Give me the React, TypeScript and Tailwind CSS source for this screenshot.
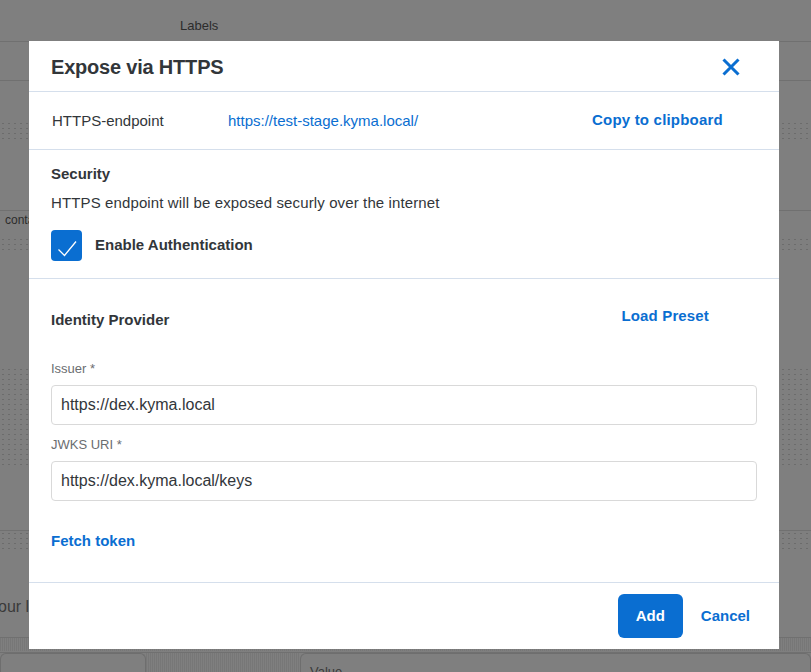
import React from "react";

const font = { fontFamily: '"Liberation Sans", Arial, sans-serif' };

function Dots({ h }: { h: string }) {
  return (
    <div
      className={`${h} w-full bg-[radial-gradient(circle,#6c6c6c_0.8px,transparent_1px)] bg-[length:6px_5px]`}
    />
  );
}

function Background() {
  return (
    <div className="w-full h-full text-[#2c2c2c]">
      <div className="h-[42px] border-b border-[#707070]">
        <div className="pl-[180px] pt-[17px] text-[13px] leading-[18px]">Labels</div>
      </div>
      <div className="h-[39px] border-b border-[#707070]" />
      <div className="h-[40px]" />
      <Dots h="h-[22px]" />
      <div className="h-[68px] border-b border-[#707070]" />
      <div className="h-[26px] pl-[5px] pt-[1px] text-[12px] leading-[16px]">contact</div>
      <Dots h="h-[13px]" />
      <div className="h-[117px]" />
      <Dots h="h-[101px]" />
      <div className="h-[63px] border-b border-[#707070]" />
      <Dots h="h-[22px]" />
      <div className="h-[84px] pt-[44px] -ml-[2px] text-[16px] leading-[20px] text-[#3a3a3a]">
        our labels
      </div>
      <div className="h-[14px] border-t border-[#707070] bg-[repeating-linear-gradient(90deg,#777_0px,#777_1px,#7f7f7f_1px,#7f7f7f_2px)]" />
      <div className="flex h-[30px] border-t border-[#707070] mt-[1px]">
        <div className="w-[146px] border border-[#6e6e6e] rounded-t-[6px] border-b-0" />
        <div className="w-[154px] bg-[repeating-linear-gradient(90deg,#777_0px,#777_1px,#7f7f7f_1px,#7f7f7f_2px)]" />
        <div className="flex-1 border border-[#6e6e6e] rounded-t-[6px] border-b-0 pl-[9px] pt-[10px] text-[13px] leading-[16px] text-[#3a3a3a]">
          Value
        </div>
      </div>
    </div>
  );
}

function Input({ value }: { value: string }) {
  return (
    <div className="h-[40px] w-full border border-[#d9d9d9] rounded-[4px] flex items-center pl-[9px] text-[16px] text-[#32363a]">
      {value}
    </div>
  );
}

export default function App() {
  return (
    <div className="relative w-[811px] h-[672px] overflow-hidden bg-[#7f7f7f]" style={font}>
      <Background />
      <div className="absolute left-[29px] top-[41px] w-[750px] h-[608px] bg-white flex flex-col text-[#32363a]">
        {/* Header */}
        <div className="h-[51px] flex items-center justify-between pl-[22px] pr-[39px] border-b border-[#d5dfec]">
          <div className="text-[20px] font-bold leading-[24px] tracking-[-0.2px] pt-[1px]">Expose via HTTPS</div>
          <svg width="18" height="18" viewBox="0 0 18 18" className="mt-[1px]">
            <path d="M1.5 1.5 L16.5 16.5 M16.5 1.5 L1.5 16.5" stroke="#0a6ed1" strokeWidth="3" strokeLinecap="butt" />
          </svg>
        </div>
        {/* Endpoint row */}
        <div className="h-[58px] flex items-center pl-[23px] border-b border-[#d5dfec] text-[15px] leading-[20px]">
          <div className="w-[176px]">HTTPS-endpoint</div>
          <div className="w-[364px] text-[#0a6ed1]">https://test-stage.kyma.local/</div>
          <div className="text-[#0a6ed1] font-bold -mt-[2px] tracking-[0.2px]">Copy to clipboard</div>
        </div>
        {/* Security */}
        <div className="px-[22px] pt-[14px] pb-[17px] border-b border-[#d5dfec] flex flex-col">
          <div className="text-[15px] leading-[20px] font-bold">Security</div>
          <div className="mt-[9px] text-[15px] leading-[20px] tracking-[0.12px]">
            HTTPS endpoint will be exposed securly over the internet
          </div>
          <div className="mt-[17px] flex items-center">
            <div className="w-[31px] h-[31px] rounded-[4px] bg-[#0a6ed1] flex items-center justify-center">
              <svg width="31" height="31" viewBox="0 0 31 31">
                <path d="M7.5 19.5 L13.5 25.5 L25 11.5" fill="none" stroke="white" strokeWidth="1.3" />
              </svg>
            </div>
            <div className="ml-[13px] text-[15px] font-bold leading-[20px] -mt-[1px]">Enable Authentication</div>
          </div>
        </div>
        {/* Identity Provider */}
        <div className="flex-1 px-[22px] pt-[27px] flex flex-col">
          <div className="flex items-start justify-between pr-[48px]">
            <div className="pt-[4px] text-[15px] font-bold leading-[20px]">Identity Provider</div>
            <div className="text-[15px] font-bold leading-[20px] text-[#0a6ed1] tracking-[0.15px]">Load Preset</div>
          </div>
          <div className="mt-[31px] text-[13px] leading-[16px] text-[#6a6d70]">Issuer *</div>
          <div className="mt-[8px]">
            <Input value="https://dex.kyma.local" />
          </div>
          <div className="mt-[12px] text-[13px] leading-[16px] text-[#6a6d70]">JWKS URI *</div>
          <div className="mt-[8px]">
            <Input value="https://dex.kyma.local/keys" />
          </div>
          <div className="mt-[30px] text-[15px] font-bold leading-[20px] text-[#0a6ed1]">Fetch token</div>
        </div>
        {/* Footer */}
        <div className="h-[67px] border-t border-[#d5dfec] flex items-center justify-end pr-[29px]">
          <div className="w-[65px] h-[44px] rounded-[6px] bg-[#0a6ed1] text-white text-[15px] font-bold flex items-center justify-center">
            Add
          </div>
          <div className="ml-[18px] text-[15px] font-bold text-[#0a6ed1]">Cancel</div>
        </div>
      </div>
    </div>
  );
}
